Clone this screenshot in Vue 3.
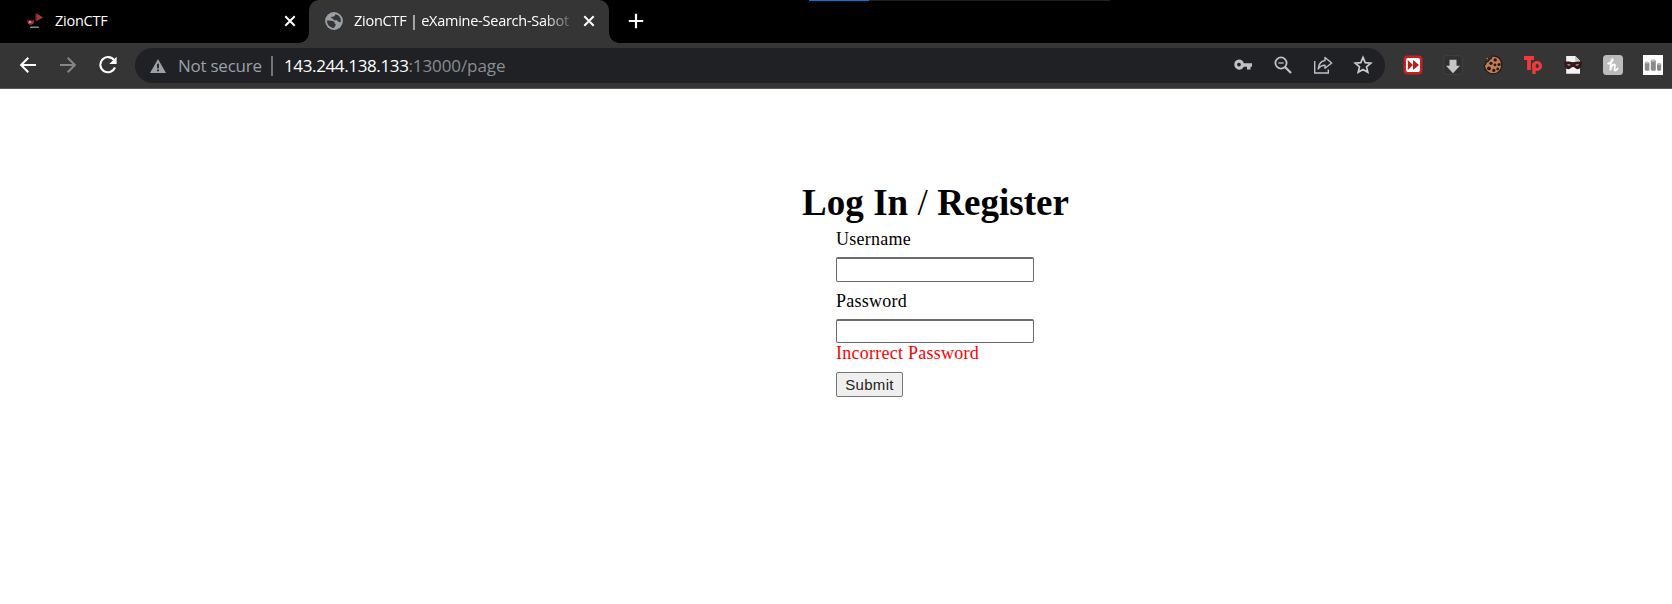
<script setup>
import { ref } from 'vue'

const username = ref('')
const password = ref('')
</script>

<template>
  <div class="browser">
    <div class="tabstrip">
      <div class="progress"><span class="progress-fill"></span></div>
      <div class="tab first">
        <svg class="favicon" width="18" height="18" viewBox="0 0 18 18">
          <path d="M10.2 1.2 L17.2 5.6 L10.2 9.2 Z" fill="#a8323b" />
          <path d="M9.6 1.5 V9.5 M1.5 8 Q4 12 8 8.5" stroke="#4a181d" stroke-width="1" fill="none" />
          <path d="M1.2 8.6 H8.2 Q8 12.8 4.7 12.8 Q1.6 12.8 1.2 8.6Z" fill="#a8323b" />
          <circle cx="4" cy="10" r="1.2" fill="#e28a90" />
          <rect x="4" y="14.6" width="9" height="1.5" rx=".7" fill="#8a8a8a" />
        </svg>
        <span class="tab-title">ZionCTF</span>
        <svg class="close" width="12" height="12" viewBox="0 0 12 12"><path d="M1.3 1.3 10.7 10.7M10.7 1.3 1.3 10.7" stroke="#fff" stroke-width="2" /></svg>
      </div>
      <div class="tab active">
        <svg class="favicon" width="18" height="18" viewBox="0 0 18 18">
          <circle cx="9" cy="9" r="8.9" fill="#9aa0a6" />
          <path d="M2 8.6 C4.5 8.4 6.5 8.7 8 9 C9.6 9.4 9.8 10.4 9.6 11.4 C10.6 11.6 11 12.4 10.6 13.2 L9 15.9 C5 16 2 12.8 2 8.6 Z" fill="#353535" />
          <path d="M10.6 2.2 C14.4 3 16.1 6.2 15.9 9.6 C15.2 10.6 14 10.4 13.3 9.6 C12.6 8.9 12.4 8.2 11.2 8.2 C9.8 8.3 8.6 8.2 8.2 7.2 C7.8 6.2 6.4 6.6 6 5.8 C5.9 4.9 7.4 4.8 8.6 4.6 C9.8 4.4 9.6 3 10.6 2.2 Z" fill="#353535" />
        </svg>
        <span class="tab-title clipped">ZionCTF | eXamine-Search-Sabot</span>
        <svg class="close" width="12" height="12" viewBox="0 0 12 12"><path d="M1.3 1.3 10.7 10.7M10.7 1.3 1.3 10.7" stroke="#fff" stroke-width="2" /></svg>
      </div>
      <svg class="plus" width="16" height="16" viewBox="0 0 16 16"><path d="M8 .8V15.2M.8 8H15.2" stroke="#fff" stroke-width="2.2" /></svg>
    </div>

    <div class="toolbar">
      <div class="cell"><svg width="18" height="18" viewBox="0 0 18 18"><path d="M17 9H2.3M9.3 1.8 2.1 9l7.2 7.2" fill="none" stroke="#fff" stroke-width="2" /></svg></div>
      <div class="cell"><svg width="18" height="18" viewBox="0 0 18 18"><path d="M1 9H15.7M8.7 1.8 15.9 9l-7.2 7.2" fill="none" stroke="#858585" stroke-width="2" /></svg></div>
      <div class="cell"><svg width="18" height="18" viewBox="0 0 18 18"><path d="M15.1 4.2A7.6 7.6 0 1 0 16 11.5" fill="none" stroke="#fff" stroke-width="2.1" /><path d="M17.6.8V8.1H10.3Z" fill="#fff" /></svg></div>
      <div class="omnibox">
        <svg class="warn" width="16" height="14" viewBox="0 0 16 14"><path d="M8 0 16 14H0Z" fill="#9aa0a6" /><path d="M8 4.8V9.2M8 10.4V12.2" stroke="#202124" stroke-width="1.8" /></svg>
        <span class="insecure">Not secure</span>
        <span class="divider"></span>
        <span class="host">143.244.138.133</span><span class="path">:13000/page</span>
        <div class="actions">
          <div class="cell"><svg width="18" height="12" viewBox="0 0 18 12"><path fill-rule="evenodd" d="M5 .6a5 5 0 0 1 4.8 3.7H18V7.8H16.5V10.5H13V7.8H9.8A5 5 0 1 1 5 .6Z M5 3.7a1.9 1.9 0 1 0 0 3.8a1.9 1.9 0 0 0 0-3.8Z" fill="#bdc1c6" /></svg></div>
          <div class="cell"><svg width="18" height="18" viewBox="0 0 18 18"><circle cx="7" cy="7" r="5.6" fill="none" stroke="#bdc1c6" stroke-width="1.8" /><path d="M4.4 7H9.6" stroke="#bdc1c6" stroke-width="1.3" /><path d="M11 11 17 17" stroke="#bdc1c6" stroke-width="2.3" /></svg></div>
          <div class="cell"><svg width="20" height="20" viewBox="0 0 20 20" fill="none" stroke="#bdc1c6" stroke-width="1.4"><path d="M1.7 6V18H15.3V14.5" /><path d="M12 2.5 18.7 8 12 13.3V10.3C8.8 10.3 6.8 11.4 5.2 14C5.6 9.3 8 6.2 12 5.5Z" stroke-linejoin="round" /></svg></div>
          <div class="cell"><svg width="20" height="20" viewBox="0 0 20 20"><path d="M10 2.4 12.2 7.6 17.8 8.1 13.5 11.8 14.8 17.3 10 14.4 5.2 17.3 6.5 11.8 2.2 8.1 7.8 7.6Z" fill="none" stroke="#c6c8ca" stroke-width="1.7" /></svg></div>
        </div>
      </div>
      <div class="extensions">
        <div class="cell"><svg width="20" height="20" viewBox="0 0 20 20"><rect x=".5" y=".5" width="19" height="19" rx="4" fill="#c6201e" /><rect x="3" y="3" width="14" height="14" rx="2" fill="#fff" /><path d="M4.8 5 10 10 4.8 15ZM10 5 16 10 10 15Z" fill="#b51c1b" /></svg></div>
        <div class="cell"><svg width="20" height="20" viewBox="0 0 20 20"><rect x=".7" y=".7" width="18.6" height="18.6" rx="2.5" fill="#303030" stroke="#414141" /><path d="M6.5 4.7H13.5V10.8H17L10 18.2 3 10.8H6.5Z" fill="#c6c6c6" /></svg></div>
        <div class="cell"><svg width="20" height="20" viewBox="0 0 20 20"><path d="M9 1.2C14.5.2 18.8 4.2 18.8 10C18.8 15.2 14.9 18.8 10 18.8C5.2 18.8 1.5 15 1.3 10.6C3 9.6 3.4 8.2 2.9 6.6C4.9 7.2 6.1 6.2 5.8 4.2C7.3 4.5 8.8 3.6 9 1.2Z" fill="#c27d52" stroke="#221a16" stroke-width="1.2" /><g fill="#251713"><circle cx="12.2" cy="4.9" r="1.7" /><circle cx="8" cy="8.3" r="1.6" /><circle cx="12" cy="9.9" r="1.4" /><circle cx="16.1" cy="9.5" r="1.6" /><circle cx="6" cy="13.4" r="1.9" /><circle cx="10.8" cy="15.4" r="1.6" /><circle cx="14.7" cy="14" r="1.4" /></g><circle cx="4.3" cy="3.5" r=".8" fill="#c27d52" /></svg></div>
        <div class="cell"><svg width="20" height="20" viewBox="0 0 20 20" fill="none" stroke="#f0393b"><path d="M1 3H11M6 3V15" stroke-width="3.8" /><circle cx="14" cy="11" r="3.5" stroke-width="3.2" /><path d="M11 8V19" stroke-width="3.4" /></svg></div>
        <div class="cell"><svg width="20" height="20" viewBox="0 0 20 20"><path d="M3.2 1H12.2L17 5.8V18.7H3.2Z" fill="#f4f4f4" /><path d="M12.2 1V5.8H17Z" fill="#bfc5ca" /><path d="M.8 7C5 5.7 7.5 7.2 10 7.2S15 5.7 19.2 7C18.7 11.5 17 14.4 14.4 14.2C12.3 14 11.8 12 10 12S7.7 14 5.6 14.2C3 14.4 1.3 11.5.8 7Z" fill="#351817" /><path d="M3.8 9.8Q5.8 8.6 7.8 10Q5.7 11.3 3.8 9.8ZM12.2 10Q14.2 8.6 16.2 9.8Q14.3 11.3 12.2 10Z" fill="#cfc4c2" /></svg></div>
        <div class="cell"><svg width="20" height="20" viewBox="0 0 20 20"><rect width="20" height="20" rx="3.5" fill="#bcbcbc" /><path d="M5.2 8.5C7.3 8.7 10.5 5.2 9.6 4.3C8.2 3.5 7.4 10.6 7.4 15.5C8 11.2 9.8 9.1 11.2 9.3C13.2 9.6 10.4 15.2 12 15.5C13.3 15.6 14 14.6 14.6 13.6" fill="none" stroke="#fff" stroke-width="1.8" stroke-linecap="round" /></svg></div>
        <div class="cell"><svg width="20" height="20" viewBox="0 0 20 20"><rect width="20" height="20" fill="#fff" /><g fill="#8a8a8a"><rect x="1.8" y="7" width="4.6" height="8.8" rx="1.5" /><rect x="7.8" y="4.8" width="5" height="11" rx="1.5" /><rect x="14" y="8.2" width="4.2" height="7.6" rx="1.5" /></g><g fill="#bcbcbc"><ellipse cx="4.1" cy="7.6" rx="2.2" ry="1.1" /><ellipse cx="10.3" cy="5.6" rx="2.4" ry="1.2" /><ellipse cx="16.1" cy="8.9" rx="2" ry="1" /></g></svg></div>
      </div>
    </div>

    <main class="page">
      <h1>Log In <span class="slash">/</span> Register</h1>
      <form @submit.prevent>
        <label for="username">Username</label>
        <input id="username" v-model="username" type="text" />
        <label for="password">Password</label>
        <input id="password" v-model="password" type="password" />
        <p class="error">Incorrect Password</p>
        <button type="submit">Submit</button>
      </form>
    </main>
  </div>
</template>

<style>
html, body { background: #fff; overflow: hidden; }
</style>

<style scoped>
.browser { width: 1672px; height: 604px; overflow: hidden; font-family: "Open Sans", "Noto Sans", sans-serif; }
svg { display: block; flex: none; }
.tabstrip { position: relative; height: 43px; background: #000; display: flex; align-items: flex-start; }
.progress { position: absolute; left: 809px; top: 0; width: 301px; height: 1px; background: #202020; }
.progress-fill { display: block; width: 60px; height: 1px; background: #0078d7; }
.tab { position: relative; height: 43px; box-sizing: border-box; display: flex; align-items: center; color: #fff; font-size: 14.5px; white-space: nowrap; }
.tab.first { width: 309px; padding: 0 13px 1px 26px; }
.tab.active { width: 300px; padding: 0 14px 1px 16px; background: #353535; border-radius: 10px 10px 0 0; }
.tab.active::before, .tab.active::after { content: ""; position: absolute; bottom: 0; width: 10px; height: 10px; }
.tab.active::before { left: -10px; background: radial-gradient(circle at 0 0, transparent 9.5px, #353535 10px); }
.tab.active::after { right: -10px; background: radial-gradient(circle at 100% 0, transparent 9.5px, #353535 10px); }
.tab-title { margin-left: 11px; line-height: 20px; letter-spacing: -.25px; }
.clipped { width: 222px; -webkit-mask-image: linear-gradient(90deg, #000 190px, transparent 222px); mask-image: linear-gradient(90deg, #000 190px, transparent 222px); }
.close { margin-left: auto; }
.plus { margin: 13px 0 0 19px; }
.toolbar { height: 46px; box-sizing: border-box; padding: 0 0 1px 7.5px; background: #353535; border-bottom: 1px solid #5b5858; display: flex; align-items: center; }
.cell { width: 40px; flex: none; display: flex; align-items: center; justify-content: center; }
.omnibox { width: 1250px; height: 35px; box-sizing: border-box; margin-left: 7.5px; padding: 0 2.5px 0 15px; border-radius: 18px; background: #202124; display: flex; align-items: center; font-size: 17px; line-height: 24px; white-space: nowrap; flex: none; }
.warn, .divider { margin-top: 1px; }
.insecure, .host, .path { padding-top: 2px; }
.insecure { width: 84px; margin-left: 12px; color: #9aa0a6; letter-spacing: -.25px; }
.divider { width: 2px; height: 20px; margin-right: 11px; margin-left: 9px; background: #72767a; }
.host { color: #fff; letter-spacing: -.37px; }
.path { color: #8a8d91; letter-spacing: -.1px; }
.actions { display: flex; align-items: center; margin-left: auto; }
.extensions { display: flex; align-items: center; margin-left: 7.5px; }
.page { padding: 93px 0 0 802px; font-family: "Liberation Serif", serif; color: #000; }
h1 { margin: 0; font-size: 37px; line-height: 42px; letter-spacing: .05px; white-space: nowrap; }
.slash { font-weight: 400; }
form { width: 198px; margin-left: 34px; font-size: 18px; letter-spacing: .25px; }
label { display: block; height: 33px; line-height: 30px; }
input { display: block; width: 198px; height: 25px; box-sizing: border-box; margin: 0 0 4px; padding: 1px 2px; border: 1px solid #6b6b6b; border-top-width: 2px; border-radius: 2px; background: #fff; outline: none; }
#password { height: 24px; }
.error { margin: -4px 0 0; height: 29px; line-height: 21px; color: #f00; }
button { display: block; width: 67px; height: 25px; padding: 0; border: 1px solid #767676; border-radius: 2px; background: #efefef; color: #222; font: 15px "Liberation Sans", sans-serif; letter-spacing: .3px; }
</style>
